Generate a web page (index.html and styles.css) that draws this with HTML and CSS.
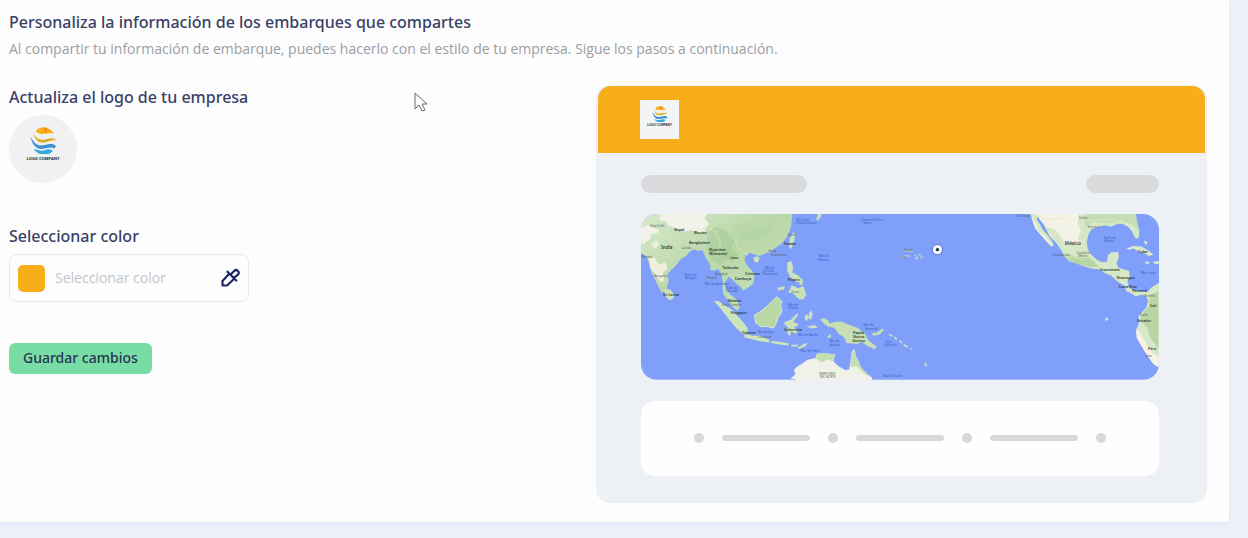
FILE: index.html
```html
<!DOCTYPE html>
<html lang="es">
<head>
<meta charset="utf-8">
<meta name="viewport" content="width=device-width, initial-scale=1">
<title>Personaliza tus embarques</title>
<link rel="stylesheet" href="styles.css">
</head>
<body>
<svg class="defs" aria-hidden="true">
  <symbol id="logo" viewBox="5 5 73 73">
    <path fill="#f9ac1e" d="M20 17C27 6 39 4 50 8c9 2 15 8 20 15-15-5-32 8-50-6z"/>
    <path fill="#de8b17" d="M42 6l6 16 3-15z"/>
    <path fill="#efb42d" d="M14 22c10 16 20 20 34 16 13-4 22-4 29 3-12-1-20 3-31 6-18 4-28-8-32-25z"/>
    <path fill="none" stroke="#6f9551" stroke-width="2" stroke-dasharray="4 3" d="M28 41c12 5 22-1 35-3"/>
    <path fill="#3e91d1" d="M7 32c10 20 22 26 37 22 14-4 24-5 31 2-1 4-2 5-4 7-12-5-19-1-29 1C21 68 10 50 7 32z"/>
    <path fill="#32aae0" d="M15 64c12 4 19 8 31 3 8-3 14-2 21 2-12 16-40 15-52-5z"/>
  </symbol>
</svg>
<main class="panel">
  <header class="intro">
    <h1 class="title">Personaliza la información de los embarques que compartes</h1>
    <p class="subtitle">Al compartir tu información de embarque, puedes hacerlo con el estilo de tu empresa. Sigue los pasos a continuación.</p>
  </header>
  <div class="columns">
    <form class="settings">
      <h2 class="title">Actualiza el logo de tu empresa</h2>
      <button type="button" class="logo-button" aria-label="Actualizar logo">
        <svg class="logo-mark" aria-hidden="true"><use href="#logo"/></svg>
        <span class="logo-name">LOGO COMPANY</span>
      </button>
      <label class="title color-label" for="color">Seleccionar color</label>
      <div class="color-field">
        <span class="swatch"></span>
        <input class="color-input" id="color" type="text" placeholder="Seleccionar color">
        <button type="button" class="picker" aria-label="Elegir color">
          <svg class="picker-icon" viewBox="0 0 24 24" fill="none" stroke="#1c2563" stroke-width="2.600" stroke-linejoin="round" stroke-linecap="round" aria-hidden="true"><path d="M11 7 3 15.500V21h5.500L17 13M9 4.500 19.500 15M12.500 8l4.500-4.500c1.500-1.500 3-1.500 4.500 0s1.500 3 0 4.500L16.500 12"/></svg>
        </button>
      </div>
      <button type="submit" class="save">Guardar cambios</button>
    </form>
    <section class="preview" aria-label="Vista previa">
      <div class="preview-bar">
        <div class="preview-logo">
          <svg class="preview-mark" aria-hidden="true"><use href="#logo"/></svg>
          <span class="preview-name">LOGO COMPANY</span>
        </div>
      </div>
      <div class="preview-body">
        <div class="pills"><span class="pill pill-long"></span><span class="pill pill-short"></span></div>
        <svg class="map" viewBox="0 0 1557 498" preserveAspectRatio="xMidYMid slice" role="img" aria-label="Mapa">
          <defs>
            <linearGradient id="asia" x1="0" y1="0" x2="1" y2="1"><stop offset="0" stop-color="#dcebd0"/><stop offset=".5" stop-color="#b9d8a9"/><stop offset="1" stop-color="#c7e3b8"/></linearGradient>
          </defs>
          <rect width="1557" height="498" fill="#7f9ffb"/>
          <g transform="translate(-18 -28)">
            <path fill="url(#asia)" d="M0 0H476L470 60 463 85 452 103 438 119 420 131 405 142 386 149 374 154 361 150 344 145 332 154 329 167 337 182 350 197 359 213 356 236 340 250 326 258 317 247 304 236 294 226 281 217 276 225 269 238 274 254 286 270 298 278 310 294 315 309 307 319 291 303 279 287 266 269 263 250 264 228 258 205 251 193 238 198 226 196 226 181 218 168 210 154 203 136 190 139 178 134 166 140 153 155 137 164 127 178 112 193 99 207 101 228 96 249 82 266 73 253 64 233 51 207 43 181 36 157 18 145H0z"/>
            <path fill="#f2f2ea" d="M18 66l22-4 15 8 19 7-9 10-14 1-7 16-18 15-12-8zM78 28h140l-10 13 15 16-13 14 4 14-21-2-26-6-20 4-25-12-21-5-8-13-20-5z"/>
            <path fill="#eef0df" d="M43 158l13-3 16 24 20-5 6 19-14 11 5 24-13 5-13-22-17-20zM48 120l17-12 9 10-14 14z"/>
            <path fill="#a9cc99" opacity=".65" d="M218 83l30-18 28 15 24 30-9 20 22 21-20 23-22-11-16 17-22-9-12-30z"/>
            <path fill="#b2d3a1" opacity=".4" d="M290 65l42-12 44 17 46-9-23 34-47 15-34-4z"/>
            <path fill="#cfe3bb" d="M86 256l8-4 12 4 12 14-2 11-11 6-12-10zM356 159l12-4 7 6-5 11-11 1zM465 102l10-20 6 7-2 19-9 25-7-5zM458 173l13-3 5 21-4 13 19 9 10 12-4 10-13-3-17-14-10-20zM471 242l19 9 16-6 8 22-9 18-12-1-18-18-14-2z"/>
            <path fill="#cde6bc" d="M237 289l18 2 14 11 22 13 17 19 16 18 15 19-1 16-13 2-19-16-18-21-22-29-14-17zM329 389l25 5 20-1 31 14-3 7-30-4-43-11z"/>
            <path fill="#b8d8a5" stroke="#dceacb" stroke-width="3" d="M359 332l13-7 13-10 14-12 16-16 12-10 15 14-4 14 4 16-11 16-6 19-9 15-19-5-18 1-16-12z"/>
            <path fill="#cce2b8" d="M449 353l20-7 18-20 4 4-16 23 16 6-4 7-10 2 12 14-5 6-15-7-3 14-8-7 2-20-10-6zM409 410l23 1 31 6-2 6-28-3-25-4zM470 421l20-1-2 7-19-1zM488 431l20-13 12-2-9 10-18 8zM510 335l8-6 5 9-6 12-6-3zM490 260l11-8 6 14-9 11zM429 249l22-4-4 10-18 2z"/>
            <path fill="#f1f2e7" d="M467 524l16-15-6-12 10-10 17-10 14-10 22-6v63z"/>
            <g fill="none" stroke="#f5e2c0" stroke-width="3" stroke-dasharray="8 5"><path d="M70 90l28 14 21 13 27 12M177 80l41-13 28 18M244 86l14 31-8 21M302 108l10 25 32 21M47 178l46 15"/></g>
            <g class="map-label"><text x="46" y="68">New Delhi</text><text class="country" x="117" y="78">Nepal</text><text class="country" x="177" y="87">Bhután</text><text class="country big" x="78" y="132">India</text><text class="country" x="162" y="119">Bangladesh</text><text x="138" y="134">Calcuta</text><text x="20" y="160">Mumbai</text><text x="57" y="217">Bangalore</text><text class="country" x="84" y="274">Sri Lanka</text><text class="country" x="222" y="139">Myanmar</text><text class="country" x="222" y="151">(Birmania)</text><text class="country" x="286" y="163">Laos</text><text class="country" x="263" y="194">Tailandia</text><text x="241" y="212">Bangkok</text><text x="216" y="224">Phuket</text><text class="country" x="300" y="227">Camboya</text><text class="country" x="331" y="210">Vietnam</text><text class="country" x="278" y="293">Malasia</text><text x="261" y="306">Kuala Lumpur</text><text class="country" x="288" y="329">Singapur</text><text class="country" x="322" y="388">Yakarta</text><text x="370" y="401">Surabaya</text><text class="country" x="447" y="121">Taiwán</text><text x="458" y="95">Taipéi</text><text x="401" y="143">Hong</text><text x="408" y="155">Guangzhou</text><text class="country" x="459" y="228">Filipinas</text><text x="470" y="267">Davao</text><text class="country" x="449" y="379">Indonesia</text></g>
            <g class="sea"><text x="149" y="214">Golfo de</text><text x="150" y="223">Bengala</text><text x="210" y="240">Mar de Andamán</text><text x="273" y="252">Golfo de</text><text x="272" y="262">Tailandia</text><text x="389" y="192">Mar de</text><text x="384" y="202">la China</text><text x="384" y="212">Meridional</text><text x="460" y="304">Mar de</text><text x="459" y="315">Célebes</text><text x="484" y="48">Mar de la</text><text x="484" y="58">China Oriental</text><text x="368" y="386">Mar de Java</text><text x="490" y="395">Mar de Banda</text><text x="498" y="442">Mar de Timor</text></g>
          </g>
          <g transform="translate(477 -28)">
            <path fill="#c6dfb4" d="M50 42l5-15h12l-5 12-8 10zM0 254l14 2 5 17-9 12-14-4zM0 220l10 6-2 16-9-1zM61 345l12-4 14 8 2 9 14-5 20-2 25 10 27 10 21 17 11 20 26 20-9 6-22-10-15-12-15 7-32-3-4-15-20-14-12-17-18-3-10-7zM216 386l15-1 17-13 6 5-14 13-18 4z"/>
            <path fill="#ccdfbb" d="M270 388l9 4-2 5-9-5zM282 395l9 5 2 8-8-5zM299 406l8 5 2 7-9-5zM314 417l12 9-2 5-12-8zM331 429l7 4-3 5zM376 473l8 10-4 4-6-9zM28 323l9-5 2 10-5 18-7-4zM20 366l26-4 8 8-19 2zM83 397l9-9 2 9-7 5z"/>
            <path fill="#abc7d2" d="M312 135l28 2v5l-24-2zM303 155l15-4h12v6l-24 3zM344 149l8 2v5l-8-3zM357 146l9 3-2 5-7-3zM345 158l9-3 4 7-9 4zM362 156l9-2v6l-8 2z"/>
            <path fill="#f1f2e7" d="M-18 524L-7 496 8 487 30 471 42 473 53 447 86 447 107 451 101 471 117 486 138 498 149 495 154 465 155 446 162 434 166 440 170 458 177 471 184 488 197 503 218 520V530H0z"/>
            <path fill="#c3dfb2" d="M50 449l17-3 40 4-7 20-17-4-17 8-17-11zM155 447l7-12 8 21 13 31 30 32-22-13-18-20-20 2z"/>
            <g class="map-label"><text class="country" x="160" y="388">Papúa</text><text class="country" x="160" y="400">Nueva</text><text class="country" x="158" y="412">Guinea</text><text x="57" y="512">TERRITORIO</text><text x="60" y="522">DEL NORTE</text><text x="313" y="140">Hawái</text><text x="303" y="159">Islas</text></g>
            <g class="sea"><text x="184" y="48">Océano Pacífico</text><text x="191" y="58">Norte</text><text x="57" y="158">Mar de</text><text x="54" y="168">Filipinas</text><text x="192" y="366">Mar de</text><text x="196" y="376">Bismarck</text><text x="90" y="414">Mar de</text><text x="90" y="424">Arafura</text><text x="258" y="415">Islas</text><text x="255" y="425">Salomón</text><text x="250" y="518">Mar del Coral</text></g>
          </g>
          <g transform="translate(1032 -28)">
            <path fill="#d6e8c8" d="M139 28H455L460 54 466 78 465 95 460 103 452 98 443 79 432 66 415 57 399 58 381 66 362 62 342 67 322 74 313 90 308 110 311 133 322 151 340 166 353 173 369 171 371 153 382 143 403 142 404 161 397 176 403 188 417 194 435 199 438 218 430 230 434 248 447 258 466 259 476 262 492 260 502 249 526 234V484L511 472 496 459 484 439 472 419 460 397 456 377 464 359 464 334 476 321 487 309 493 287 486 277 471 271 455 276 442 266 427 260 420 243 400 231 382 214 361 205 345 194 321 192 297 184 276 176 257 171 240 155 231 136 215 114 196 96 187 76 178 59 166 43 161 31 158 45 167 58 176 76 190 91 205 112 209 124 199 125 186 110 171 93 153 72 145 49z"/>
            <path fill="#f3f2e6" d="M157 28h126l-2 28 9 21-8 25 8 20-19-7-29 2-16-27-16-17-24-5-21-26zM142 38l12 17 9 23 22 21 17 20 4 7-17-15-25-28-15-23z"/>
            <path fill="#c4deb4" d="M308 28h147l8 52-17-20-32-11-44 7-47-4-18 16-5-20z"/>
            <path fill="#afd19b" opacity=".8" d="M241 146l40 12 37 2 29 27-31 1-53-15zM500 270l23-9v170l-24-30-11-33-21-20 14-28 13-14z"/>
            <path fill="#f7f2e4" d="M456 374l10 7 10 17 14 26 17 23 17 11v32l-16-11-18-25-18-29-14-24z"/>
            <path fill="#d8e9cb" d="M428 132l19-8 25 2 16 9 21 15-15 4-14-9-15-4-17-9-14 4zM482 108l8 4-2 9-7-6zM484 171l13 1-2 6-11-1zM507 171l17-2v10l-14-2zM364 340h8v8h-8z"/>
            <g fill="none" stroke="#efe3bd" stroke-width="2"><path d="M158 33l31 11 53-4 15-12M286 38l36 10 49-4 46 5M197 76l43 38 41 19M245 151l50 15M377 194l44 12"/></g>
            <g class="map-label"><text x="94" y="37">San Diego</text><text x="285" y="44">Dallas</text><text x="311" y="70">Houston</text><text class="country big" x="242" y="122">México</text><text x="206" y="153">Guadalajara</text><text x="276" y="148">Ciudad de</text><text x="282" y="158">México</text><text class="country" x="348" y="198">Guatemala</text><text class="country" x="397" y="224">Nicaragua</text><text class="country" x="403" y="250">Costa Rica</text><text class="country" x="445" y="264">Panamá</text><text class="country" x="463" y="144">Cuba</text><text x="478" y="277">Medellín</text><text class="country" x="498" y="307">Cali</text><text x="468" y="335">Quito</text><text class="country" x="459" y="354">Ecuador</text><text class="country" x="492" y="436">Perú</text><text x="483" y="457">Lima</text></g>
            <g class="sea"><text x="360" y="103">Golfo de</text><text x="361" y="113">México</text><text x="470" y="209">Mar Caribe</text></g>
          </g>
          <g><circle cx="891" cy="107" r="17" fill="#5c79c9"/><circle cx="891" cy="107" r="14" fill="#f7fafc"/><circle cx="891" cy="107" r="5" fill="#17264f"/></g>
        </svg>
        <div class="steps"><span class="dot"></span><span class="line"></span><span class="dot"></span><span class="line"></span><span class="dot"></span><span class="line"></span><span class="dot"></span></div>
      </div>
    </section>
  </div>
</main>
<svg class="cursor" viewBox="0 0 14 21" aria-hidden="true"><path d="M1 1v16l4-4 3 6 3-1-3-6h5z" fill="#fff" stroke="#666976"/></svg>
</body>
</html>
```
FILE: styles.css
```css
* { box-sizing: border-box; }
body {
  margin: 0;
  min-height: 100vh;
  padding: 0 19px 17px 0;
  background: #ebf0fb;
  color: #3a4166;
  font-family: "Open Sans", "Noto Sans", sans-serif;
}
.defs { position: absolute; width: 0; height: 0; }
.panel {
  padding: 10px 22px 19px 9px;
  background: #fdfdfd;
  border-radius: 0 0 4px 0;
  box-shadow: 0 2px 3px #e2e8f7;
}
.title { margin: 0; font: 500 16px/24px "Noto Sans", "Open Sans", sans-serif; }
.subtitle { margin: 4px 0 0; font-size: 14px; line-height: 22px; color: #9a9da3; }
.columns { display: flex; justify-content: space-between; align-items: flex-start; padding-top: 25px; }
.settings { display: flex; flex-direction: column; align-items: flex-start; width: 240px; }
.logo-button {
  display: flex;
  flex-direction: column;
  align-items: center;
  width: 68px;
  height: 68px;
  margin-top: 6px;
  padding: 12px 0 0;
  border: 0;
  border-radius: 50%;
  background: #eff1f3;
  color: #222634;
}
.logo-mark { width: 27px; height: 27px; }
.logo-name { margin-top: 2px; font: 700 4px/6px "Open Sans", sans-serif; white-space: nowrap; }
.color-label { margin-top: 41px; }
.color-field {
  display: flex;
  align-items: center;
  width: 100%;
  height: 48px;
  margin-top: 6px;
  padding: 0 8px;
  border: 1px solid #e3e9f8;
  border-radius: 8px;
}
.swatch { flex: none; width: 27px; height: 27px; border-radius: 5px; background: #f7ae1a; }
.color-input {
  flex: 1;
  min-width: 0;
  padding: 0 0 0 10px;
  border: 0;
  outline: 0;
  background: none;
  color: #30375b;
  font: 14px/22px "Open Sans", "Noto Sans", sans-serif;
}
.color-input::placeholder { color: #c1c4ca; opacity: 1; }
.picker { display: flex; padding: 0; border: 0; background: none; }
.picker-icon { width: 20px; height: 20px; }
.save {
  margin-top: 41px;
  padding: 4px 14px 5px;
  border: 0;
  border-radius: 6px;
  background: #78dda4;
  color: #283453;
  font: 500 14px/22px "Noto Sans", "Open Sans", sans-serif;
}
.preview {
  width: 51%;
  border: 1px solid #eceff3;
  border-radius: 14px;
  background: #edf0f4;
}
.preview-bar {
  margin: 0 1px;
  padding: 14px 42px;
  border-radius: 13px 13px 0 0;
  background: #f7ae1a;
}
.preview-logo {
  display: flex;
  flex-direction: column;
  align-items: center;
  width: 39px;
  height: 39px;
  padding-top: 6px;
  background: #f3f5f5;
  color: #222634;
}
.preview-mark { width: 16px; height: 16px; }
.preview-name { margin-top: 1px; font: 700 3px/4px "Liberation Sans", sans-serif; white-space: nowrap; }
.preview-body { padding: 22px 47px 26px 44px; }
.pills { display: flex; justify-content: space-between; }
.pill { height: 18px; border-radius: 9px; background: #dadbdc; }
.pill-long { width: 32%; }
.pill-short { width: 14%; }
.map { display: block; width: 100%; margin: 21px 0; border-radius: 16px; }
.map-label { font-family: "Noto Sans", sans-serif; font-size: 9px; fill: #59635c; }
.country { font-size: 11px; font-weight: 600; fill: #303c35; }
.big { font-size: 14px; }
.sea { font-family: "Noto Sans", sans-serif; font-size: 9px; fill: #345eb8; }
.steps {
  display: flex;
  align-items: center;
  gap: 18px;
  height: 75px;
  padding: 0 53px;
  border-radius: 14px;
  background: #fefefe;
}
.dot { width: 10px; height: 10px; border-radius: 50%; background: #d8d8d8; }
.line { flex: 1; height: 6px; border-radius: 3px; background: #d8d8d8; }
.cursor { position: absolute; left: 414px; top: 92px; width: 14px; height: 21px; }
```
